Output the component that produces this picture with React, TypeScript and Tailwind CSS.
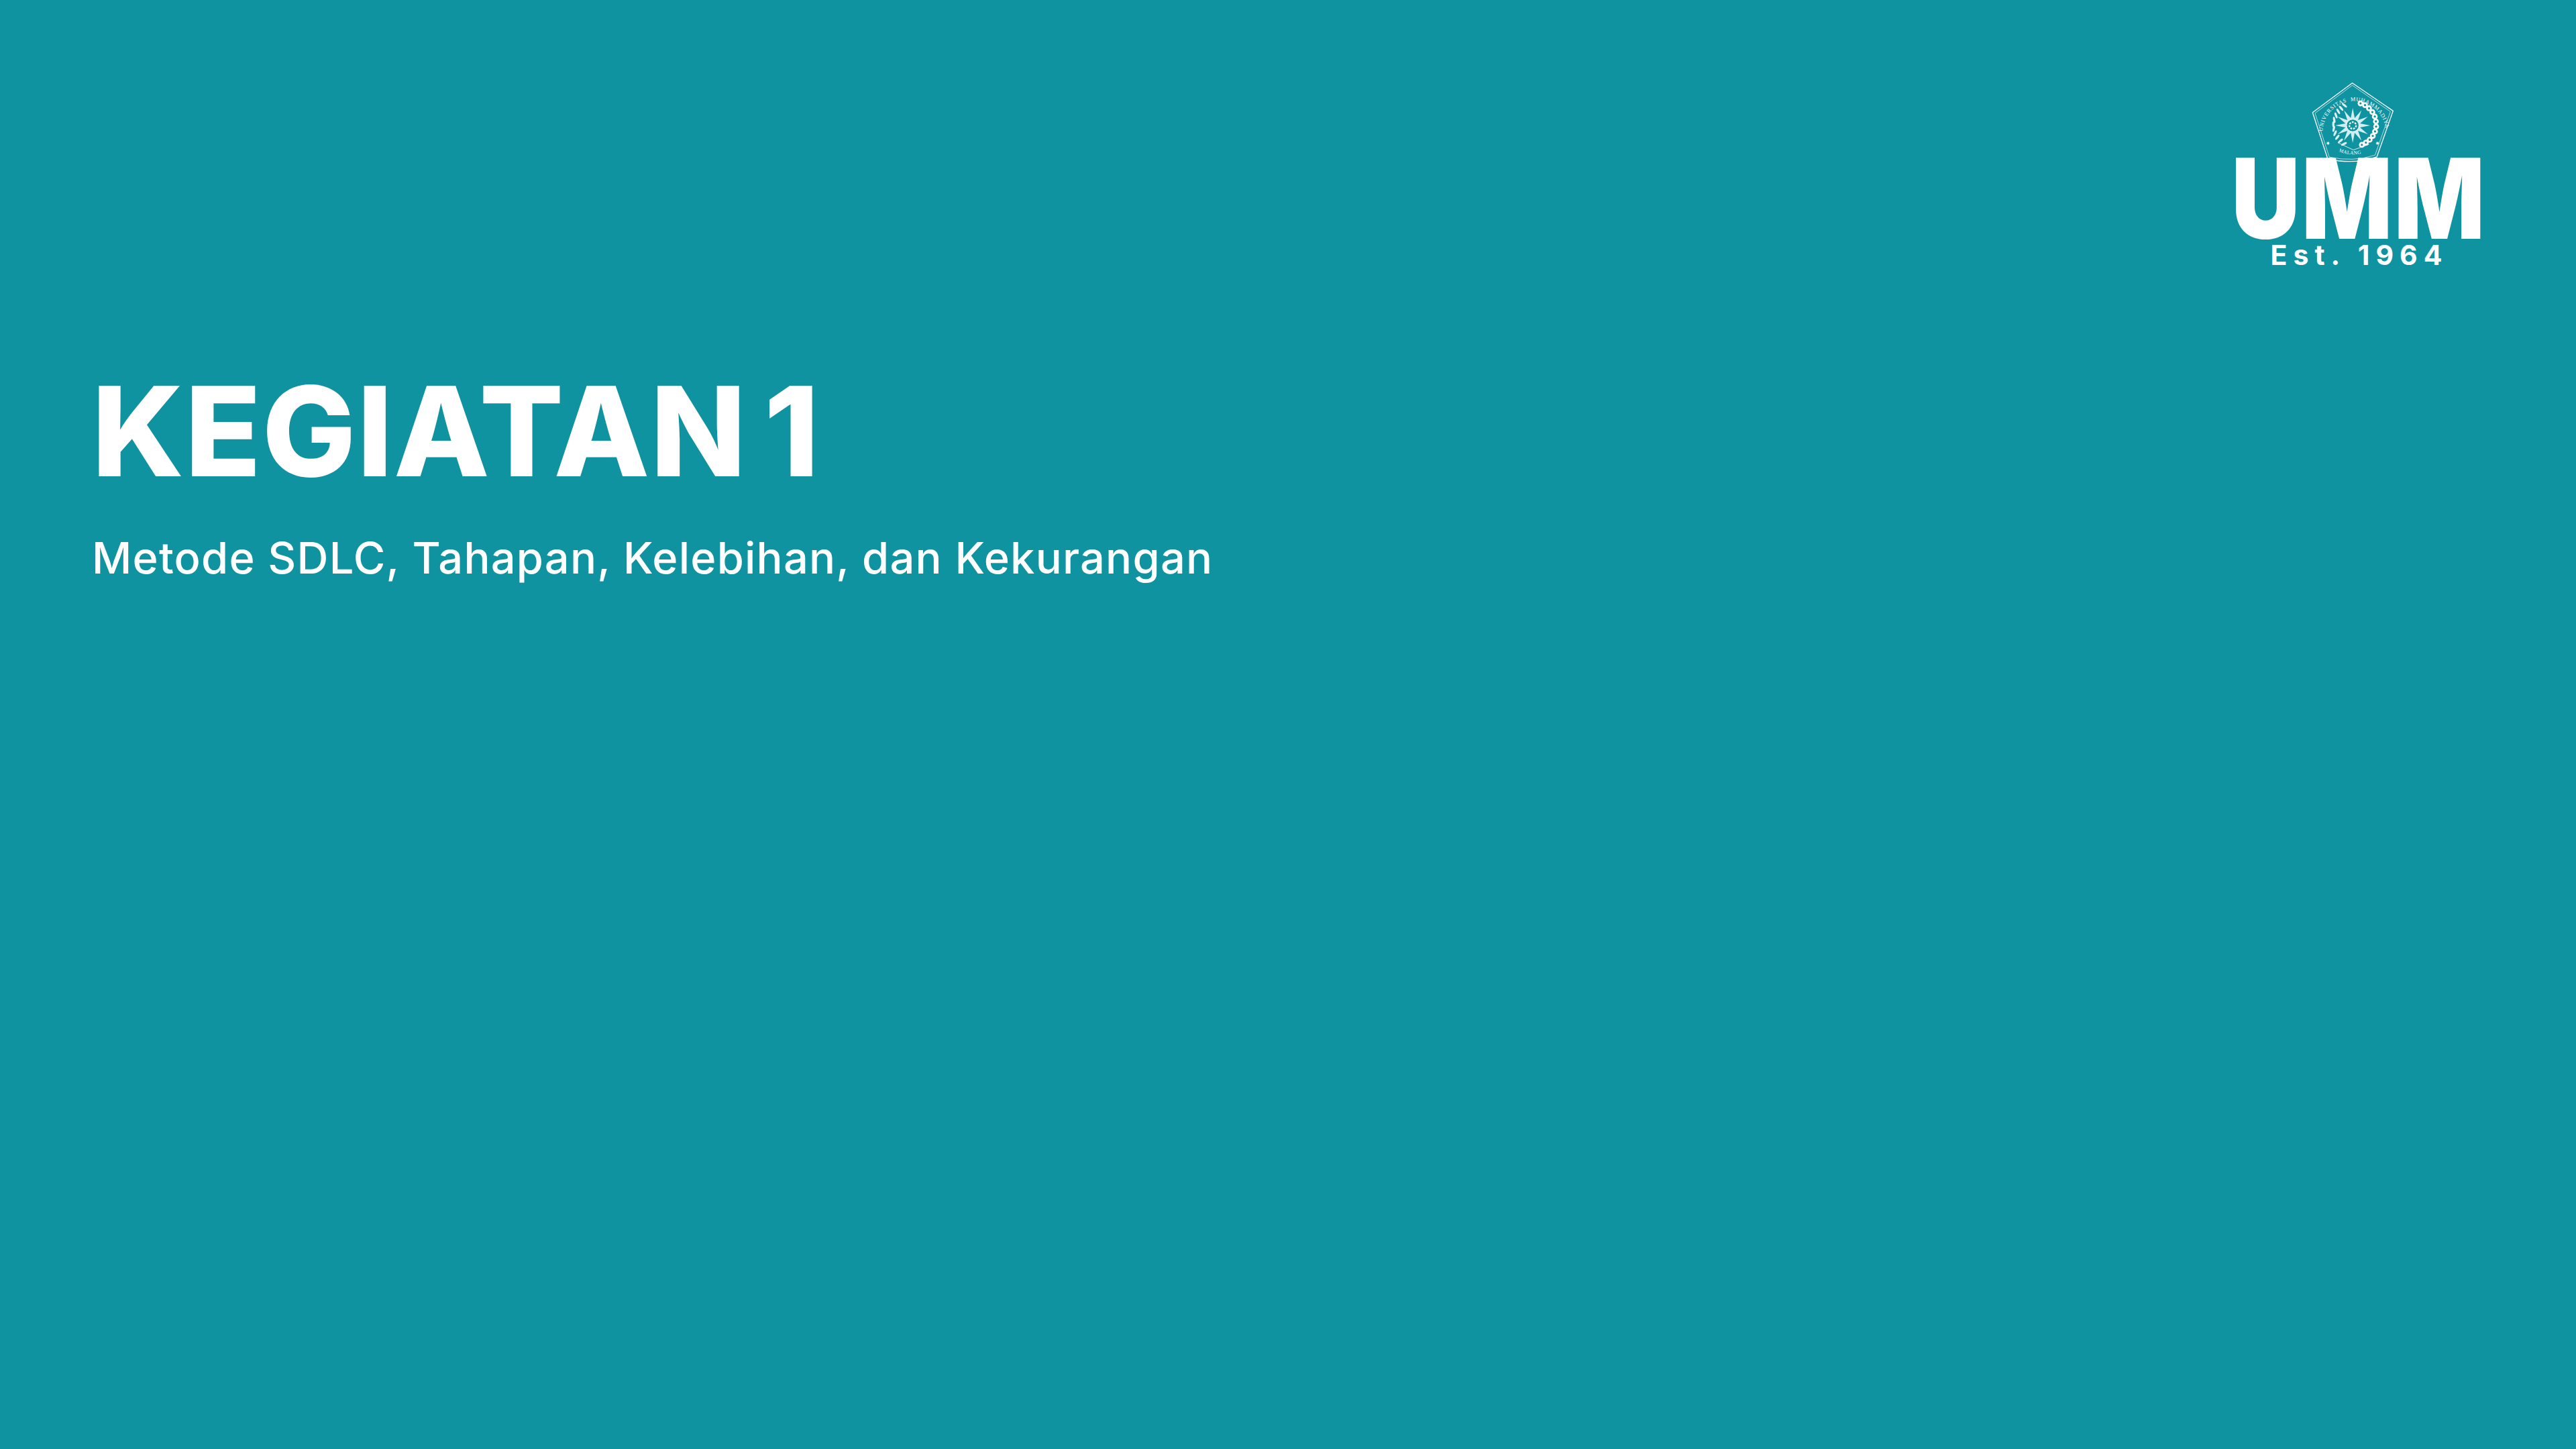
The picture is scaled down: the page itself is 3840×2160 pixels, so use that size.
import React from 'react';

const starPoints = (cx: number, cy: number, outer: number, inner: number, n: number) =>
  Array.from({ length: n * 2 }, (_, i) => {
    const r = i % 2 === 0 ? outer : inner;
    const a = (Math.PI * i) / n - Math.PI / 2;
    return `${(cx + r * Math.cos(a)).toFixed(1)},${(cy + r * Math.sin(a)).toFixed(1)}`;
  }).join(' ');

// chain links on the right side of the seal, coords follow the crest
const chainLinks = [
  [222, 96], [242, 104], [260, 118], [275, 135], [286, 155], [291, 177], [292, 200],
  [287, 222], [277, 242], [263, 259], [246, 272], [228, 282],
];

const wreathLeaves = [
  [150, 105, -50], [135, 118, -40], [122, 132, -30], [112, 150, -20], [104, 170, -10], [100, 190, 0],
  [102, 210, 12], [108, 230, 25], [118, 248, 38], [132, 264, 50], [148, 278, 62],
];

const Seal = () => (
  <svg viewBox="0 0 370 360" className="w-[123px] h-[120px] mr-[22px] -mb-[6px] relative overflow-visible">
    <path d="M185 5 L368 130 L295 336 Q190 372 75 345 L7 137 Z" fill="none" stroke="white" strokeWidth="4" />
    <path d="M185 15 L356 133 L287 328 Q190 360 82 337 L18 140 Z" fill="none" stroke="white" strokeWidth="2" />
    <defs>
      <path id="sealTop" d="M52 222 A142 142 0 0 1 335 212" />
      <path id="sealBottom" d="M125 312 Q190 338 255 312" />
    </defs>
    <text fill="white" fontSize="25" fontFamily="'Liberation Serif', serif">
      <textPath href="#sealTop" textLength="440" lengthAdjust="spacing">
        {'UNIVERSITAS\u00A0\u00A0MUHAMMADIYAH'}
      </textPath>
    </text>
    <text fill="white" fontSize="22" fontFamily="'Liberation Serif', serif" letterSpacing="1">
      <textPath href="#sealBottom">MALANG</textPath>
    </text>
    {/* mentari */}
    <polygon points={starPoints(187, 195, 78, 34, 12)} fill="#cfeef1" />
    <circle cx="187" cy="195" r="28" fill="#1093a0" stroke="white" strokeWidth="3" />
    <circle cx="187" cy="195" r="15" fill="none" stroke="white" strokeWidth="7" strokeDasharray="8 5" />
    {/* padi */}
    {wreathLeaves.map(([x, y, rot]) => (
      <ellipse key={`${x}-${y}`} cx={x} cy={y} rx="5" ry="14" fill="white" opacity="0.85" transform={`rotate(${rot} ${x} ${y})`} />
    ))}
    {/* rantai */}
    {chainLinks.map(([x, y]) => (
      <circle key={`${x}-${y}`} cx={x} cy={y} r="9" fill="none" stroke="white" strokeWidth="8" />
    ))}
    <polyline points="120,272 190,305 260,280" fill="none" stroke="white" strokeWidth="2.5" />
    <polygon points={starPoints(76, 275, 9, 4, 8)} fill="white" />
    <polygon points={starPoints(298, 275, 9, 4, 8)} fill="white" />
  </svg>
);

const UmmLogo = () => (
  <div className="flex flex-col items-center w-[366px] text-white">
    <Seal />
    <div className="font-['Inter',sans-serif] font-black text-[166px] leading-[120px] tracking-[0.02em] scale-x-[0.85]">
      UMM
    </div>
    <div className="font-['Inter',sans-serif] font-bold text-[41px] leading-[40px] tracking-[0.22em] mt-[4px]">
      Est. 1964
    </div>
  </div>
);

export default function App() {
  return (
    <div className="w-full h-screen flex flex-col bg-[#1093a0] overflow-hidden">
      <header className="flex justify-end pt-[122px] pr-[140px]">
        <UmmLogo />
      </header>
      <main className="pl-[137px] mt-[143px] text-white font-['Inter',sans-serif]">
        <h1 className="font-extrabold text-[186px] leading-[200px] tracking-[0.008em] [word-spacing:-0.09em]">KEGIATAN 1</h1>
        <p className="font-medium text-[65px] leading-[80px] tracking-[1.2px] mt-[49px]">
          Metode SDLC, Tahapan, Kelebihan, dan Kekurangan
        </p>
      </main>
    </div>
  );
}
